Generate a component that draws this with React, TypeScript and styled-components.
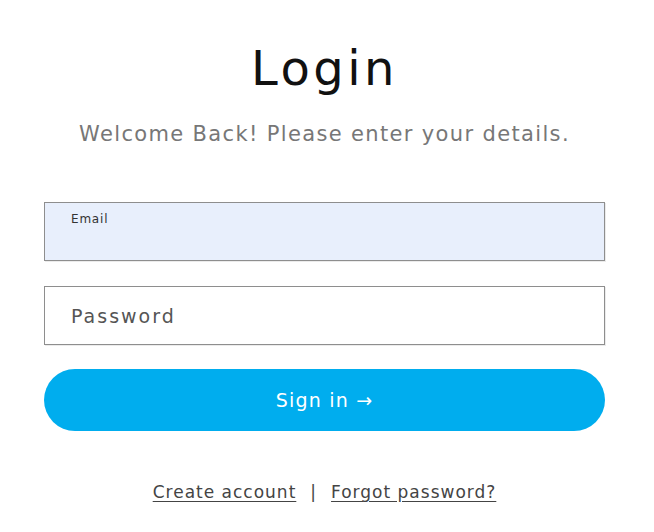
import { FC } from 'react';
import styled, { createGlobalStyle } from 'styled-components';

const GlobalStyle = createGlobalStyle`
    html, body {
        margin: 0;
        padding: 0;
        background: #fff;
        font-family: 'DejaVu Sans', 'Noto Sans', sans-serif;
    }
`;

const App: FC = () => {
    return (
        <>
            <GlobalStyle />
            <ScLogin>
                <h1>Login</h1>
                <p className='subtitle'>Welcome Back! Please enter your details.</p>
                <form onSubmit={(e) => e.preventDefault()}>
                    <Field $filled>
                        <span className='label'>Email</span>
                        <input type='email' />
                    </Field>
                    <Field>
                        <input type='password' placeholder='Password' />
                    </Field>
                    <SubmitButton type='submit'>Sign in →</SubmitButton>
                </form>
                <div className='links'>
                    <a href='#'>Create account</a>
                    <span className='sep'>|</span>
                    <a href='#'>Forgot password?</a>
                </div>
            </ScLogin>
        </>
    );
};

export default App;

const ScLogin = styled.main`
    width: 561px;
    padding: 40px 0 0 44px;
    display: flex;
    flex-direction: column;
    align-items: center;

    h1 {
        font-size: 48px;
        font-weight: 400;
        letter-spacing: 3.5px;
        color: #111;
        margin: 0;
        line-height: 56px;
    }

    .subtitle {
        font-size: 21px;
        letter-spacing: 1.35px;
        color: #777;
        margin: 26px 0 0;
        line-height: 24px;
    }

    form {
        width: 100%;
        margin-top: 56px;
        display: flex;
        flex-direction: column;
        gap: 25px;
    }

    .links {
        margin-top: 51px;
        display: flex;
        gap: 14px;
        font-size: 17px;
        letter-spacing: 1px;
        color: #444;

        a {
            color: #444;
            text-decoration: underline;
            text-underline-offset: 3px;
        }
    }
`;

const Field = styled.label<{ $filled?: boolean }>`
    position: relative;
    display: block;
    height: 59px;
    box-sizing: border-box;
    border: 1px solid #8e8e8e;
    box-shadow: 1px 1px 0 rgba(0, 0, 0, 0.08);
    background: ${({ $filled }) => ($filled ? '#e8effc' : '#fff')};

    .label {
        position: absolute;
        left: 26px;
        top: 9px;
        font-size: 12px;
        letter-spacing: 0.8px;
        color: #333;
    }

    input {
        width: 100%;
        height: 100%;
        box-sizing: border-box;
        border: none;
        outline: none;
        background: transparent;
        padding: 0 26px;
        font-family: inherit;
        font-size: 19px;
        letter-spacing: 2px;
        color: #333;
        &::placeholder {
            color: #555;
        }
    }
`;

const SubmitButton = styled.button`
    height: 62px;
    margin-top: -1px;
    border: none;
    border-radius: 31px;
    background: #00adee;
    color: #fff;
    font-family: inherit;
    font-size: 19px;
    font-weight: 500;
    letter-spacing: 1.2px;
    cursor: pointer;
`;
